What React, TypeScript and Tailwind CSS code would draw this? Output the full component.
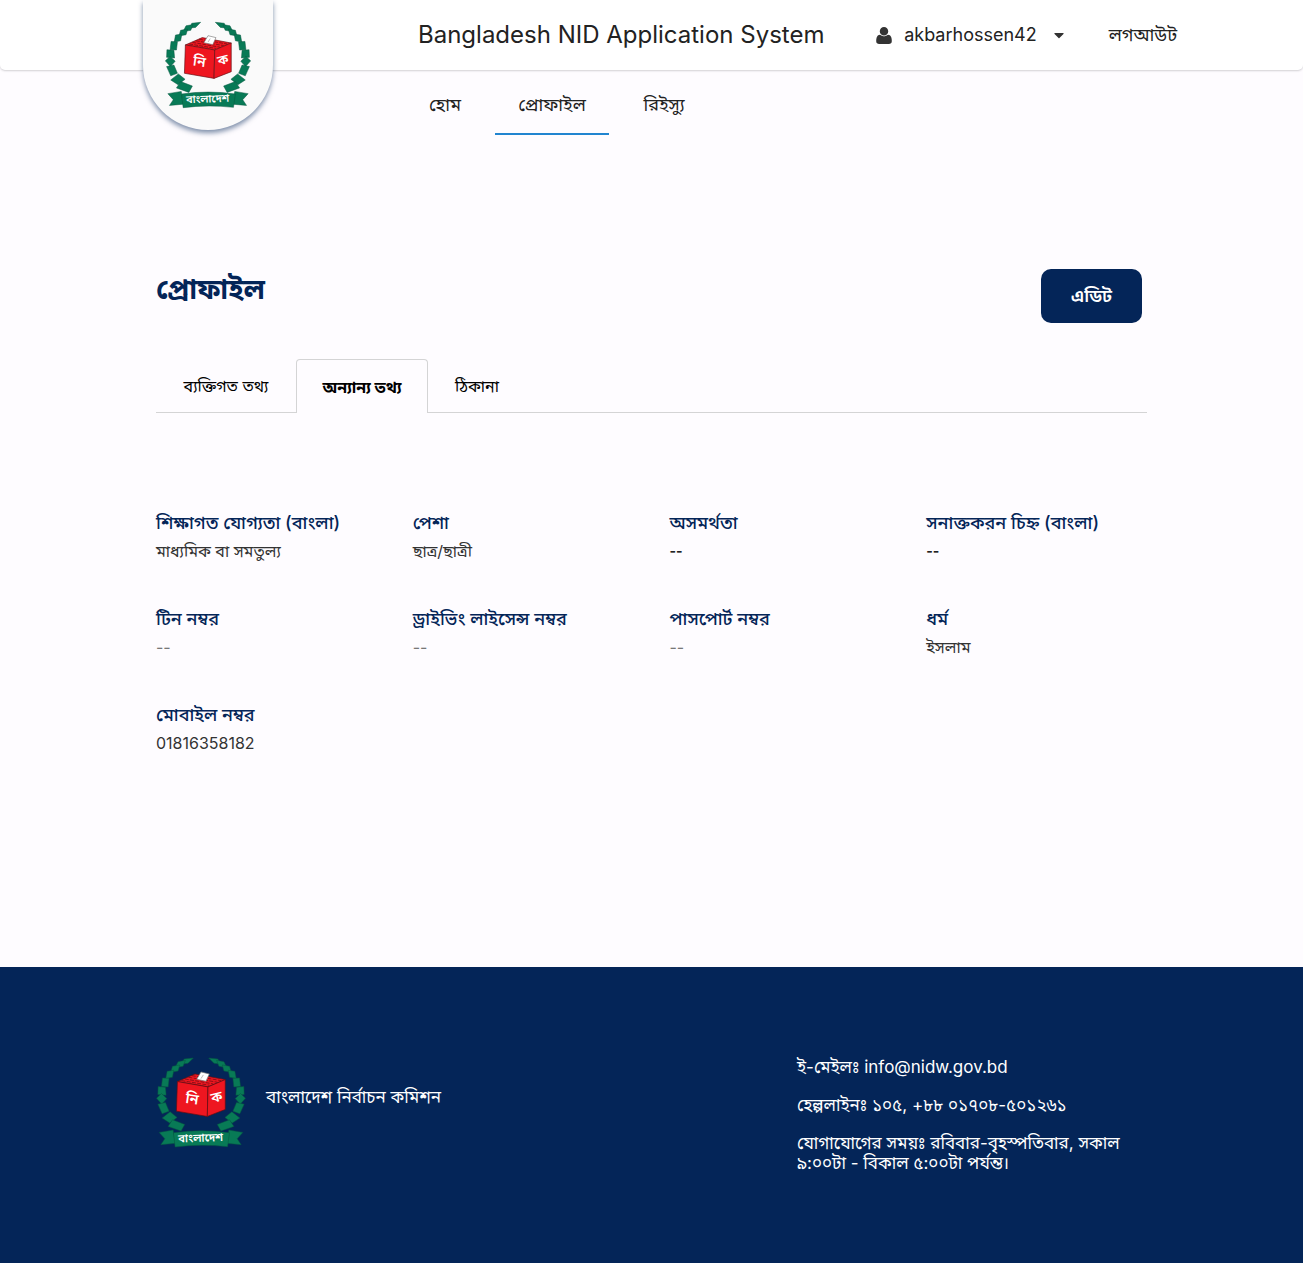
import { FaCaretDown } from 'react-icons/fa';

const leaves = [
  '132,54 160,51 144,67 126,69',
  '114,62 136,58 129,76 105,80',
  '97,76 119,72 114,90 92,94',
  '81,91 101,88 97,109 77,113',
  '67,111 87,112 84,138 64,137',
  '54,137 76,139 78,163 53,161',
  '49,172 64,158 80,173 65,190',
  '53,190 76,185 87,211 66,219',
  '66,232 90,213 111,230 89,247',
  '97,237 134,251 123,271 84,257',
];

function Emblem({ className }: { className: string }) {
  return (
    <svg viewBox="48 48 270 274" className={className} role="img" aria-label="নির্বাচন কমিশন">
      <g fill="#087a56" stroke="#065740" strokeWidth="1.5" strokeLinejoin="round">
        {leaves.map((p) => (
          <polygon key={p} points={p} />
        ))}
        <g transform="translate(366 0) scale(-1 1)">
          {leaves.map((p) => (
            <polygon key={p} points={p} />
          ))}
        </g>
        <path d="M57 275 L99 268 L106 308 L62 312 L74 294 Z" />
        <path d="M309 275 L267 268 L260 308 L304 312 L292 294 Z" />
        <path d="M100 276 Q183 264 269 276 L263 318 Q183 309 105 319 Z" />
      </g>
      <g stroke="#5c0d12" strokeWidth="2" strokeLinejoin="round" fill="#ee1620">
        <path d="M112 122 L165 99 L256 116 L204 138 Z" />
        <path d="M112 122 L204 138 L202 227 L109 211 Z" />
        <path d="M204 138 L256 116 L256 206 L202 227 Z" />
      </g>
      <g stroke="#5c0d12" strokeWidth="2" strokeDasharray="12 4" fill="none">
        <path d="M124 119 L208 133 M134 114 L220 129 M145 109 L232 124 M155 104 L243 119" />
      </g>
      <path d="M183 93 L208 99 L198 121 L170 115 Z" fill="#fff" stroke="#777" strokeWidth="2" />
      <path d="M190 102 L183 113" stroke="#999" strokeWidth="2" />
      <g fill="#fff" fontWeight="600" textAnchor="middle">
        <text x="156" y="189" fontSize="44" transform="rotate(8 156 175)">নি</text>
        <text x="230" y="183" fontSize="42" transform="rotate(-14 230 170)">ক</text>
        <text x="182" y="303" fontSize="34" transform="rotate(-2 182 295)">বাংলাদেশ</text>
      </g>
    </svg>
  );
}

function UserIcon({ className }: { className: string }) {
  return (
    <svg viewBox="0 0 1408 1536" className={className} fill="currentColor" aria-hidden="true">
      <path d="M1408 1277q0 120-73 189.500t-194 69.500h-874q-121 0-194-69.500t-73-189.500q0-53 3.500-103.500t14-109 26.500-108.500 43-97.500 62-81 85.500-53.500 111.500-20q9 0 42 21.500t74.500 48 108 48 133.500 21.500 133.500-21.500 108-48 74.500-48 42-21.500q61 0 111.500 20t85.500 53.500 62 81 43 97.500 26.500 108.500 14 109 3.500 103.500zM1088 384q0 159-112.500 271.500t-271.500 112.500-271.500-112.500-112.500-271.500 112.500-271.500 271.500-112.500 271.500 112.500 112.500 271.500z" />
    </svg>
  );
}

const fields = [
  { label: 'শিক্ষাগত যোগ্যতা (বাংলা)', value: 'মাধ্যমিক বা সমতুল্য', tone: 'text-base text-[#333]' },
  { label: 'পেশা', value: 'ছাত্র/ছাত্রী', tone: 'text-base text-[#333]' },
  { label: 'অসমর্থতা', value: '--', tone: 'text-sm font-bold text-[#222]' },
  { label: 'সনাক্তকরন চিহ্ন (বাংলা)', value: '--', tone: 'text-sm font-bold text-[#222]' },
  { label: 'টিন নম্বর', value: '--', tone: 'text-base text-[#777]' },
  { label: 'ড্রাইভিং লাইসেন্স নম্বর', value: '--', tone: 'text-base text-[#777]' },
  { label: 'পাসপোর্ট নম্বর', value: '--', tone: 'text-base text-[#777]' },
  { label: 'ধর্ম', value: 'ইসলাম', tone: 'text-base text-[#333]' },
  { label: 'মোবাইল নম্বর', value: '01816358182', tone: 'text-base text-[#333]' },
];

export default function App() {
  return (
    <div className="flex min-h-screen flex-col bg-[#fefcff] font-['Inter','Noto_Sans_Bengali','Noto_Sans',sans-serif] text-[#222]">
      <header className="h-[70px] rounded-b-[5px] bg-white shadow-[0_1px_2px_rgba(34,36,38,0.2)]">
        <div className="mx-auto flex max-w-[1051px] items-start pl-[17px]">
          <a
            href="#home"
            className="flex h-[130px] w-[130px] shrink-0 justify-center rounded-b-full bg-[#fafafa] pt-[21px] shadow-[0_3px_5px_rgba(4,37,88,0.5)]"
          >
            <Emblem className="h-[88px] w-[86px]" />
          </a>
          <div className="ml-[145px] flex h-[70px] flex-1 items-center">
            <h1 className="text-2xl whitespace-nowrap">Bangladesh NID Application System</h1>
            <button type="button" className="ml-auto flex items-center text-lg">
              <UserIcon className="mr-3 h-[17px] w-4 text-[#333]" />
              akbarhossen42
              <FaCaretDown className="ml-4 h-4 w-3 text-[#333]" />
            </button>
            <a href="#logout" className="ml-11 text-lg whitespace-nowrap">লগআউট</a>
          </div>
        </div>
      </header>

      <nav className="mx-auto flex h-[65px] w-full max-w-[1051px] pl-[279px] text-lg">
        <a href="#home" className="mr-2.5 flex w-20 items-center justify-center border-b-2 border-transparent pt-1.5">হোম</a>
        <a href="#profile" className="flex w-[114px] items-center justify-center border-b-2 border-[#2185d0] pt-1.5">প্রোফাইল</a>
        <a href="#reissue" className="flex w-[110px] items-center justify-center border-b-2 border-transparent pt-1.5">রিইস্যু</a>
      </nav>

      <main className="mx-auto w-full max-w-[991px] flex-1 pt-[134px] pb-40">
        <div className="flex items-start justify-between pr-[5px]">
          <h2 className="text-[28px] leading-10 font-bold text-[#042558]">প্রোফাইল</h2>
          <button type="button" className="h-[54px] w-[101px] rounded-[10px] bg-[#042558] text-lg font-semibold text-white">
            এডিট
          </button>
        </div>

        <div role="tablist" className="mt-9 flex h-[54px] border-b border-[#d4d4d5] text-base text-black">
          <button type="button" role="tab" className="w-[140px]">ব্যক্তিগত তথ্য</button>
          <button
            type="button"
            role="tab"
            aria-selected="true"
            className="-mb-px w-[132px] rounded-t border border-b-0 border-[#d4d4d5] bg-[#fefcff] font-bold"
          >
            অন্যান্য তথ্য
          </button>
          <button type="button" role="tab" className="w-[98px]">ঠিকানা</button>
        </div>

        <dl className="mt-24 grid grid-cols-4 gap-x-9 gap-y-10">
          {fields.map((f) => (
            <div key={f.label} className="h-14">
              <dt className="text-lg leading-7 font-medium whitespace-nowrap text-[#042558]">{f.label}</dt>
              <dd className={`${f.tone} leading-7`}>{f.value}</dd>
            </div>
          ))}
        </dl>
      </main>

      <footer className="h-[296px] bg-[#042558] text-[17px] leading-5 text-white">
        <div className="mx-auto flex max-w-[991px] items-start justify-between pt-[90px]">
          <div className="flex gap-5">
            <Emblem className="h-[91px] w-[90px]" />
            <p className="pt-[30px]">বাংলাদেশ নির্বাচন কমিশন</p>
          </div>
          <address className="flex w-[350px] flex-col gap-[18px] pr-5 not-italic">
            <p>ই-মেইলঃ info@nidw.gov.bd</p>
            <p>হেল্পলাইনঃ ১০৫, +৮৮ ০১৭০৮-৫০১২৬১</p>
            <p>যোগাযোগের সময়ঃ রবিবার-বৃহস্পতিবার, সকাল ৯:০০টা - বিকাল ৫:০০টা পর্যন্ত।</p>
          </address>
        </div>
      </footer>
    </div>
  );
}
